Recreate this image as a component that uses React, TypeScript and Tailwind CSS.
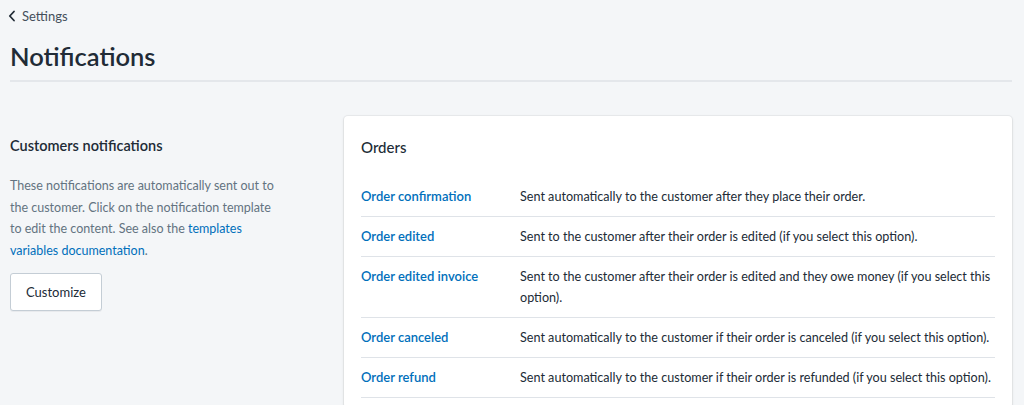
import React from 'react';

const orders = [
  {name: 'Order confirmation', desc: 'Sent automatically to the customer after they place their order.'},
  {name: 'Order edited', desc: 'Sent to the customer after their order is edited (if you select this option).'},
  {
    name: 'Order edited invoice',
    desc: 'Sent to the customer after their order is edited and they owe money (if you select this option).',
  },
  {name: 'Order canceled', desc: 'Sent automatically to the customer if their order is canceled (if you select this option).'},
  {name: 'Order refund', desc: 'Sent automatically to the customer if their order is refunded (if you select this option).'},
];

function ChevronLeft() {
  return (
    <svg width="8" height="12" viewBox="0 0 8 12" fill="none" className="mr-[6px]">
      <path d="M6 1.5L1.8 6L6 10.5" stroke="#212b36" strokeWidth="1.8" strokeLinecap="round" strokeLinejoin="round" />
    </svg>
  );
}

export default function App() {
  return (
    <div
      className="min-h-[405px] bg-[#f4f6f8] text-[#212b36] pl-[10px] pr-[12px]"
      style={{fontFamily: 'Lato, "Noto Sans", sans-serif'}}
    >
      {/* header */}
      <div className="pt-[6px]">
        <a href="#" className="flex items-center text-[13px] leading-[20px] text-[#454f5b] -ml-[2px]">
          <ChevronLeft />
          Settings
        </a>
        <h1 className="mt-[14px] text-[25.5px] leading-[32px] font-semibold text-[#212b36]">Notifications</h1>
        <div className="mt-[8px] h-[2px] bg-[#e4e7eb]" />
      </div>

      <div className="mt-[34px] flex gap-[20px]">
        {/* left column */}
        <div className="w-[314px] shrink-0 pt-[19px]">
          <h2 className="text-[14.5px] leading-[22px] font-semibold">Customers notifications</h2>
          <p className="mt-[18px] w-[272px] text-[12.5px] leading-[21.6px] text-[#637381]">
            These notifications are automatically sent out to the customer. Click on the notification template to
            edit the content. See also the{' '}
            <a href="#" className="text-[#006fbb]">
              templates variables documentation
            </a>
            .
          </p>
          <button className="mt-[12px] h-[38px] px-[15px] rounded-[3px] border border-[#c4cdd5] bg-white text-[13px] text-[#212b36] shadow-[0_1px_0_rgba(22,29,37,0.05)]">
            Customize
          </button>
        </div>

        {/* card */}
        <div className="flex-1 bg-white rounded-[4px] shadow-[0_0_0_1px_rgba(63,63,68,0.05),0_1px_3px_0_rgba(63,63,68,0.15)] px-[17px] pt-[20px] pb-[10px]">
          <h3 className="text-[15px] leading-[22px] font-medium">Orders</h3>
          <div className="mt-[19px]">
            {orders.map((o) => (
              <div key={o.name} className="flex border-b border-[#dfe3e8] py-[9px] leading-[21px]">
                <a href="#" className="w-[159px] shrink-0 text-[13px] font-semibold text-[#006fbb]">
                  {o.name}
                </a>
                <div className="flex-1 text-[12.6px] text-[#212b36]">{o.desc}</div>
              </div>
            ))}
          </div>
        </div>
      </div>
    </div>
  );
}
